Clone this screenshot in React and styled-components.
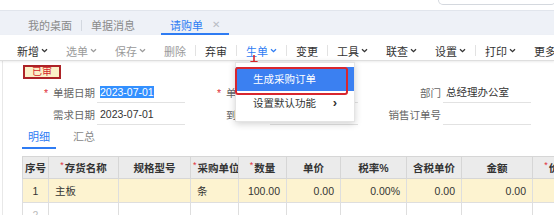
import styled, { createGlobalStyle } from "styled-components";

const GlobalStyle = createGlobalStyle`
  body {
    margin: 0;
    background: #fff;
    overflow: hidden;
    font-family: "Liberation Sans", "Noto Sans CJK SC", sans-serif;
  }
  * { box-sizing: border-box; }
`;

const blue = "#2f7cf3";

const toolbar = [
  { label: "新增", caret: true, tone: "dark" },
  { label: "选单", caret: true, tone: "off" },
  { label: "保存", caret: true, tone: "off" },
  { label: "删除", tone: "off", sep: true },
  { label: "弃审", tone: "dark", sep: true },
  { label: "生单", caret: true, tone: "blue", menu: true, sep: true },
  { label: "变更", tone: "dark", sep: true },
  { label: "工具", caret: true, tone: "dark" },
  { label: "联查", caret: true, tone: "dark" },
  { label: "设置", caret: true, tone: "dark", sep: true },
  { label: "打印", caret: true, tone: "dark" },
  { label: "更多", tone: "dark" },
];

const fields = [
  { label: "单据日期", req: true, value: "2023-07-01", selected: true },
  { label: "单据编号", req: true },
  { label: "部门", value: "总经理办公室" },
  { label: "需求日期", value: "2023-07-01" },
  { label: "到货日期" },
  { label: "销售订单号" },
];

const columns = [
  { title: "序号", w: 26 },
  { title: "存货名称", w: 70, req: true },
  { title: "规格型号", w: 72 },
  { title: "采购单位", w: 48, req: true },
  { title: "数量", w: 48, req: true },
  { title: "单价", w: 54 },
  { title: "税率%", w: 66 },
  { title: "含税单价", w: 55 },
  { title: "金额", w: 71 },
  { title: "价税合计", w: 70, req: true },
];

const rows = [
  ["1", "主板", "", "条", "100.00", "0.00", "0.00%", "0.00", "0.00", ""],
  ["2", "", "", "", "", "", "", "", "", ""],
];

const Caret = ({ color }) => (
  <svg width="7" height="5" viewBox="0 0 7 5">
    <path d="M1 1.2 L3.5 3.6 L6 1.2" fill="none" stroke={color} strokeWidth="1.3" />
  </svg>
);

const tones = { dark: "#333", off: "#9a9a9a", blue: blue };

export default function App() {
  return (
    <Page>
      <GlobalStyle />
      <TopBar>
        <SearchBox />
      </TopBar>

      <TabStrip>
        <Tab>我的桌面</Tab>
        <TabSep />
        <Tab>单据消息</Tab>
        <Tab $active>
          请购单 <Close>✕</Close>
        </Tab>
      </TabStrip>

      <Toolbar>
        {toolbar.map((t) => (
          <ToolGroup key={t.label}>
            <ToolItem $tone={t.tone}>
              {t.label}
              {t.caret && <Caret color={tones[t.tone]} />}
              {t.menu && (
                <>
                  <Arrow width="10" height="12" viewBox="0 0 10 12">
                    <line x1="5" y1="0" x2="5" y2="7" stroke="#e0262a" strokeWidth="1.6" />
                    <path d="M1 6 L9 6 L5 11.5 Z" fill="#e0262a" />
                  </Arrow>
                  <Menu>
                    <MenuItem $active>生成采购订单</MenuItem>
                    <MenuItem>
                      设置默认功能 <span>›</span>
                    </MenuItem>
                  </Menu>
                </>
              )}
            </ToolItem>
            {t.sep && <ToolSep />}
          </ToolGroup>
        ))}
      </Toolbar>

      <Content>
        <Stamp>已审</Stamp>

        <FormGrid>
          {fields.map((f) => (
            <Field key={f.label}>
              <Label>
                {f.req && <Req>*</Req>}
                {f.label}
              </Label>
              <Value>{f.selected ? <Selected>{f.value}</Selected> : f.value}</Value>
            </Field>
          ))}
        </FormGrid>

        <DetailTabs>
          <DetailTab $active>明细</DetailTab>
          <DetailTab>汇总</DetailTab>
        </DetailTabs>

        <Grid>
          <colgroup>
            {columns.map((c) => (
              <col key={c.title} style={{ width: c.w }} />
            ))}
          </colgroup>
          <thead>
            <tr>
              {columns.map((c) => (
                <Th key={c.title}>
                  {c.req && <SmallReq>*</SmallReq>}
                  {c.title}
                </Th>
              ))}
            </tr>
          </thead>
          <tbody>
            {rows.map((r, i) => (
              <Tr key={i} $current={i === 0}>
                {r.map((cell, j) => (
                  <Td key={j} $align={j === 0 ? "center" : j >= 4 ? "right" : "left"} $muted={i > 0}>
                    {cell}
                  </Td>
                ))}
              </Tr>
            ))}
          </tbody>
        </Grid>
      </Content>
    </Page>
  );
}

const Page = styled.div`
  width: 554px;
  height: 215px;
  overflow: hidden;
  position: relative;
  background: #fff;
`;

const TopBar = styled.div`
  height: 10px;
  display: flex;
  justify-content: flex-end;
`;

const SearchBox = styled.div`
  width: 118px;
  height: 5px;
  margin-right: -2px;
  border: 1px solid #d4d8de;
  border-top: none;
  border-radius: 0 0 5px 5px;
`;

const TabStrip = styled.div`
  height: 25px;
  display: flex;
  padding-left: 19px;
  background: #eef1f7;
  border-top: 1px solid #e1e5ec;
`;

const Tab = styled.div`
  display: flex;
  align-items: center;
  gap: 9px;
  padding: 5px 9px 0;
  margin-left: ${(p) => (p.$active ? "17px" : "0")};
  font-size: 11px;
  color: ${(p) => (p.$active ? blue : "#8a8a8a")};
  border-bottom: 2px solid ${(p) => (p.$active ? blue : "transparent")};
`;

const Close = styled.span`
  font-size: 10px;
  color: #b8bcc4;
`;

const TabSep = styled.div`
  width: 1px;
  height: 11px;
  margin-top: 9px;
  background: #d3d8e0;
`;

const Toolbar = styled.div`
  height: 26px;
  display: flex;
  padding: 5px 0 0 8px;
  border-bottom: 1px solid #dedede;
  box-shadow: 0 1px 2px rgba(0, 0, 0, 0.08);
  position: relative;
  z-index: 2;
`;

const ToolGroup = styled.div`
  display: flex;
  align-items: center;
  height: 21px;
`;

const ToolItem = styled.div`
  position: relative;
  display: flex;
  align-items: center;
  gap: 2px;
  padding: 0 9px;
  height: 21px;
  font-size: 11px;
  white-space: nowrap;
  color: ${(p) => tones[p.$tone]};
`;

const ToolSep = styled.div`
  width: 1px;
  height: 11px;
  background: #e2e2e2;
`;

const Arrow = styled.svg`
  position: absolute;
  left: 12px;
  top: 15px;
`;

const Menu = styled.div`
  position: absolute;
  left: -2px;
  top: 22px;
  width: 120px;
  height: 60px;
  padding: 4px 0;
  background: #fff;
  border: 1px solid #e4e4e4;
  box-shadow: 0 2px 7px rgba(0, 0, 0, 0.18);
`;

const MenuItem = styled.div`
  position: relative;
  display: flex;
  justify-content: space-between;
  height: 24px;
  line-height: 24px;
  padding: 0 17px;
  font-size: 10.5px;
  background: ${(p) => (p.$active ? "#3b80f1" : "transparent")};
  color: ${(p) => (p.$active ? "#fff" : "#333")};
  span {
    font-size: 13px;
    font-weight: bold;
  }
  &::after {
    content: "";
    display: ${(p) => (p.$active ? "block" : "none")};
    position: absolute;
    left: -1px;
    top: 0;
    width: 109px;
    height: 24px;
    border: 2px solid #d8262e;
    border-radius: 3px;
  }
`;

const Content = styled.div`
  margin-left: 2px;
  border-left: 1px solid #e8e8e8;
  padding-top: 4px;
`;

const Stamp = styled.div`
  width: 38px;
  height: 14px;
  margin-left: 20px;
  border: 2px solid #ad2327;
  background: #fbf0c8;
  color: #d3262b;
  font-size: 10px;
  line-height: 10px;
  text-align: center;
`;

const FormGrid = styled.div`
  display: grid;
  grid-template-columns: repeat(3, 170px);
  column-gap: 3px;
  row-gap: 2px;
  margin: 4px 0 0 12px;
`;

const Field = styled.div`
  display: grid;
  grid-template-columns: 80px 88px;
  column-gap: 2px;
  height: 20px;
`;

const Label = styled.div`
  text-align: right;
  font-size: 10.5px;
  line-height: 20px;
  color: #666;
  white-space: nowrap;
`;

const Req = styled.span`
  color: #e0303a;
  margin-right: 5px;
`;

const Value = styled.div`
  padding-left: 3px;
  font-size: 10.5px;
  line-height: 19px;
  color: #333;
  border-bottom: 1px solid #e2e2e2;
  white-space: nowrap;
`;

const Selected = styled.span`
  display: inline-block;
  line-height: 12px;
  background: #3390ff;
  color: #fff;
`;

const DetailTabs = styled.div`
  display: flex;
  gap: 11px;
  margin: 2px 0 0 19px;
`;

const DetailTab = styled.div`
  padding: 0 6px;
  height: 22px;
  line-height: 20px;
  font-size: 11px;
  color: ${(p) => (p.$active ? blue : "#888")};
  border-bottom: 2px solid ${(p) => (p.$active ? blue : "transparent")};
`;

const Grid = styled.table`
  margin: 7px 0 0 19px;
  border-collapse: collapse;
  table-layout: fixed;
  width: 560px;
`;

const Th = styled.th`
  height: 22px;
  padding: 0 2px;
  background: #ebebeb;
  border: 1px solid #d6d6d6;
  font-size: 10.5px;
  font-weight: bold;
  color: #333;
  white-space: nowrap;
  overflow: hidden;
`;

const SmallReq = styled.span`
  color: #e0303a;
  font-size: 9px;
  font-weight: normal;
  vertical-align: top;
  margin-right: 1px;
`;

const Tr = styled.tr`
  background: ${(p) => (p.$current ? "#fdf3d0" : "#fff")};
`;

const Td = styled.td`
  height: 24px;
  padding: 0 6px;
  border: 1px solid #dedede;
  font-size: 10.5px;
  color: ${(p) => (p.$muted ? "#bbb" : "#333")};
  text-align: ${(p) => p.$align};
  white-space: nowrap;
`;
